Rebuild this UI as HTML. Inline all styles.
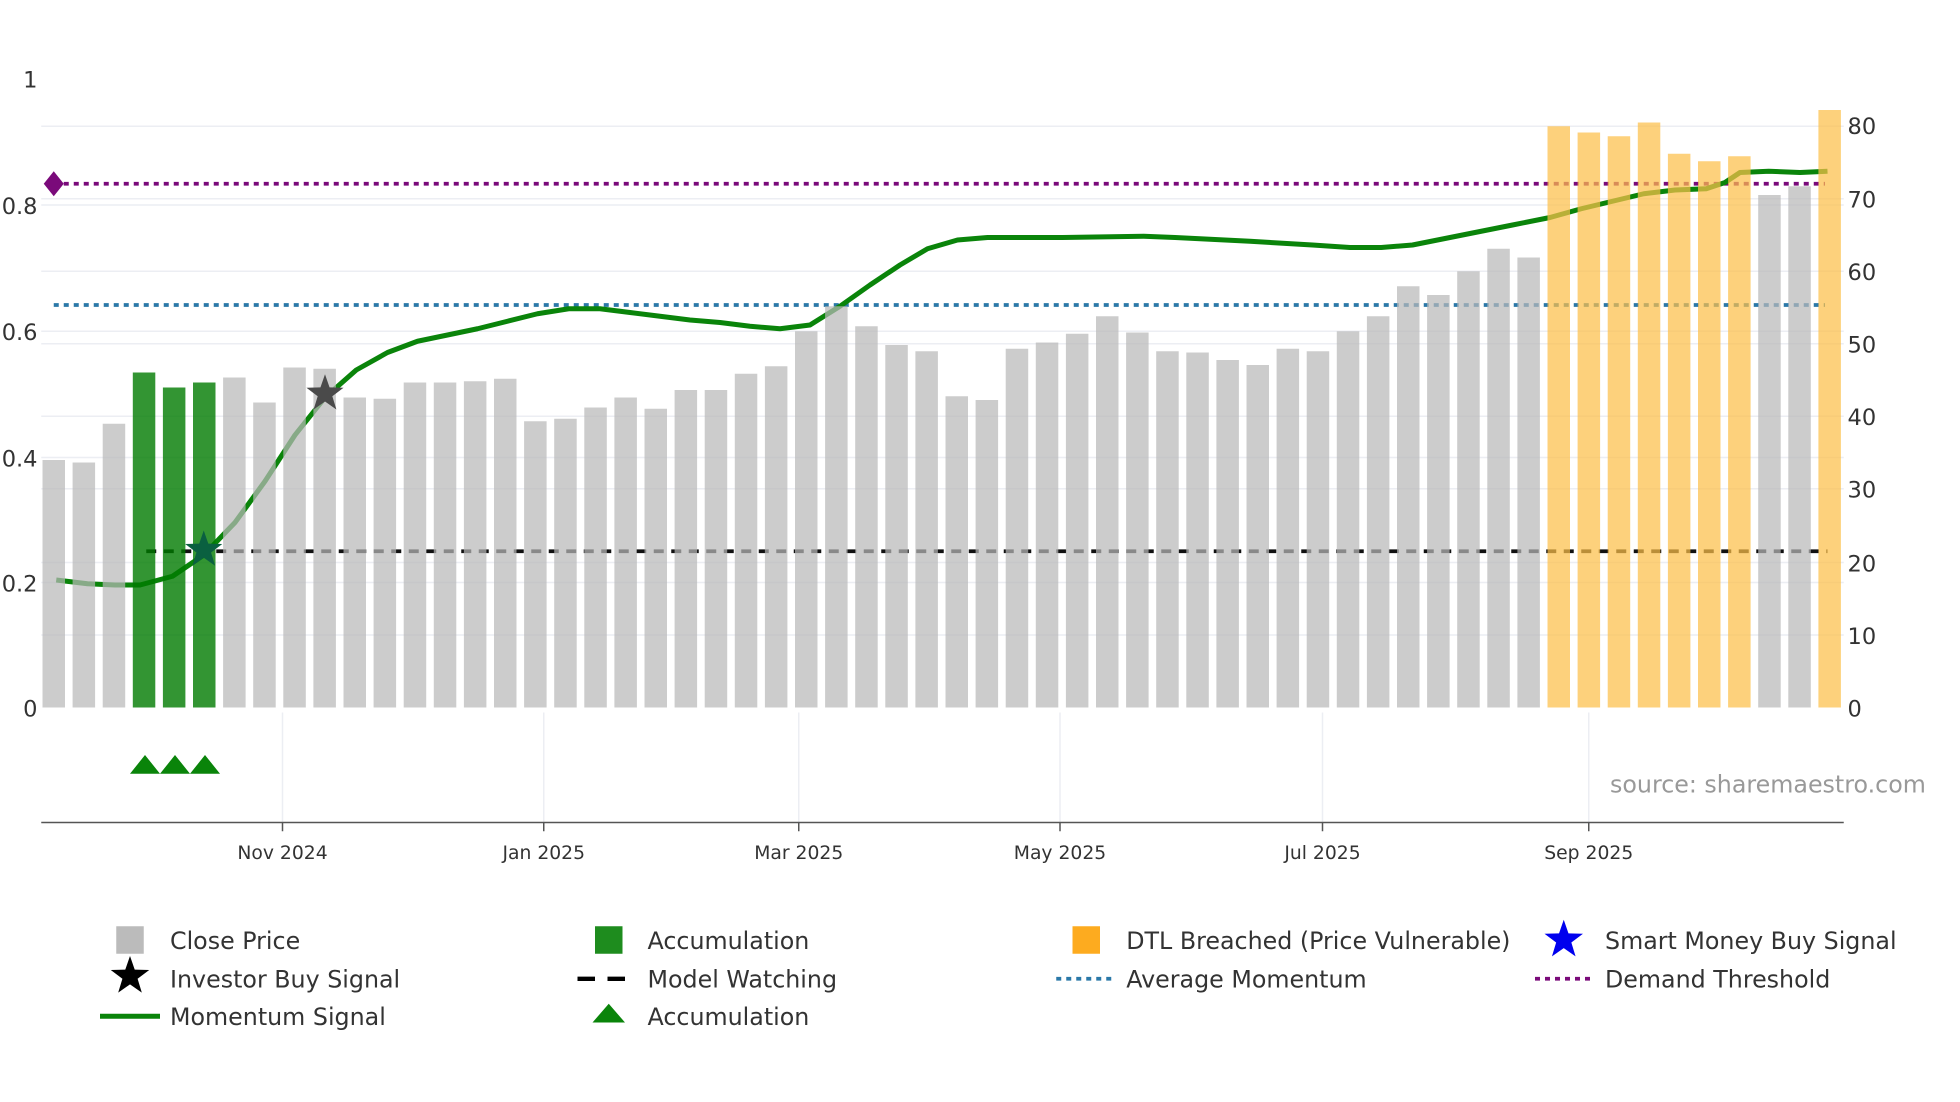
<!DOCTYPE html>
<html><head><meta charset="utf-8"><style>
html,body{margin:0;padding:0;background:#fff;}
svg{display:block;}
text{font-family:"DejaVu Sans","Liberation Sans",sans-serif;fill:#333;}
</style></head><body>
<svg width="1960" height="1102" viewBox="0 0 1568 881.6" xmlns="http://www.w3.org/2000/svg">
<rect width="1568" height="882" fill="#fff"/>
<g stroke="#eceef3" stroke-width="1.2">
<line x1="33" x2="1475" y1="101" y2="101"/><line x1="33" x2="1475" y1="159" y2="159"/>
<line x1="33" x2="1475" y1="164" y2="164"/><line x1="33" x2="1475" y1="217" y2="217"/>
<line x1="33" x2="1475" y1="265" y2="265"/><line x1="33" x2="1475" y1="275" y2="275"/>
<line x1="33" x2="1475" y1="333" y2="333"/><line x1="33" x2="1475" y1="366" y2="366"/>
<line x1="33" x2="1475" y1="391" y2="391"/><line x1="33" x2="1475" y1="450" y2="450"/>
<line x1="33" x2="1475" y1="466" y2="466"/><line x1="33" x2="1475" y1="508" y2="508"/>
<line x1="226" x2="226" y1="570" y2="658"/><line x1="435" x2="435" y1="570" y2="658"/>
<line x1="639" x2="639" y1="570" y2="658"/><line x1="848" x2="848" y1="570" y2="658"/>
<line x1="1058" x2="1058" y1="570" y2="658"/><line x1="1271" x2="1271" y1="570" y2="658"/>
</g>
<line x1="43" x2="1460" y1="147" y2="147" stroke="#7a0a7a" stroke-width="3" stroke-dasharray="4,4"/>
<line x1="43" x2="1460" y1="244" y2="244" stroke="#2a78a8" stroke-width="3" stroke-dasharray="4,4"/>
<line x1="117" x2="1462" y1="441" y2="441" stroke="#111" stroke-width="3" stroke-dasharray="8,6"/>
<polyline fill="none" stroke="#0a840a" stroke-width="4" stroke-linejoin="round" points="45,464 70,467 92,468 112,468 138,461 163,444 188,418 212,385 236,348 260,318 285,296 310,282 334,273 358,268 382,263 406,257 430,251 455,247 480,247 504,250 528,253 552,256 576,258 600,261 624,263 648,260 672,245 696,228 720,212 742,199 766,192 790,190 850,190 915,189 940,190 1000,193 1050,196 1080,198 1105,198 1130,196 1155,191 1180,186 1210,180 1240,174 1265,167 1290,161 1315,155 1340,152 1365,151 1380,146 1392,138 1415,137 1440,138 1462,137"/>
<path d="M43 137 L51 147 L43 157 L35 147Z" fill="#7a0a7a"/>
<g fill-opacity="0.72">
<rect x="34" y="368" width="18" height="198" fill="#b8b8b8"/>
<rect x="58.08" y="370" width="18" height="196" fill="#b8b8b8"/>
<rect x="82.16" y="339" width="18" height="227" fill="#b8b8b8"/>
<rect x="106.24" y="298" width="18" height="268" fill="#007a00" fill-opacity="0.8"/>
<rect x="130.32" y="310" width="18" height="256" fill="#007a00" fill-opacity="0.8"/>
<rect x="154.4" y="306" width="18" height="260" fill="#007a00" fill-opacity="0.8"/>
<rect x="178.48" y="302" width="18" height="264" fill="#b8b8b8"/>
<rect x="202.56" y="322" width="18" height="244" fill="#b8b8b8"/>
<rect x="226.64" y="294" width="18" height="272" fill="#b8b8b8"/>
<rect x="250.72" y="295" width="18" height="271" fill="#b8b8b8"/>
<rect x="274.8" y="318" width="18" height="248" fill="#b8b8b8"/>
<rect x="298.88" y="319" width="18" height="247" fill="#b8b8b8"/>
<rect x="322.96" y="306" width="18" height="260" fill="#b8b8b8"/>
<rect x="347.04" y="306" width="18" height="260" fill="#b8b8b8"/>
<rect x="371.12" y="305" width="18" height="261" fill="#b8b8b8"/>
<rect x="395.2" y="303" width="18" height="263" fill="#b8b8b8"/>
<rect x="419.28" y="337" width="18" height="229" fill="#b8b8b8"/>
<rect x="443.36" y="335" width="18" height="231" fill="#b8b8b8"/>
<rect x="467.44" y="326" width="18" height="240" fill="#b8b8b8"/>
<rect x="491.52" y="318" width="18" height="248" fill="#b8b8b8"/>
<rect x="515.6" y="327" width="18" height="239" fill="#b8b8b8"/>
<rect x="539.68" y="312" width="18" height="254" fill="#b8b8b8"/>
<rect x="563.76" y="312" width="18" height="254" fill="#b8b8b8"/>
<rect x="587.84" y="299" width="18" height="267" fill="#b8b8b8"/>
<rect x="611.92" y="293" width="18" height="273" fill="#b8b8b8"/>
<rect x="636" y="265" width="18" height="301" fill="#b8b8b8"/>
<rect x="660.08" y="245" width="18" height="321" fill="#b8b8b8"/>
<rect x="684.16" y="261" width="18" height="305" fill="#b8b8b8"/>
<rect x="708.24" y="276" width="18" height="290" fill="#b8b8b8"/>
<rect x="732.32" y="281" width="18" height="285" fill="#b8b8b8"/>
<rect x="756.4" y="317" width="18" height="249" fill="#b8b8b8"/>
<rect x="780.48" y="320" width="18" height="246" fill="#b8b8b8"/>
<rect x="804.56" y="279" width="18" height="287" fill="#b8b8b8"/>
<rect x="828.64" y="274" width="18" height="292" fill="#b8b8b8"/>
<rect x="852.72" y="267" width="18" height="299" fill="#b8b8b8"/>
<rect x="876.8" y="253" width="18" height="313" fill="#b8b8b8"/>
<rect x="900.88" y="266" width="18" height="300" fill="#b8b8b8"/>
<rect x="924.96" y="281" width="18" height="285" fill="#b8b8b8"/>
<rect x="949.04" y="282" width="18" height="284" fill="#b8b8b8"/>
<rect x="973.12" y="288" width="18" height="278" fill="#b8b8b8"/>
<rect x="997.2" y="292" width="18" height="274" fill="#b8b8b8"/>
<rect x="1021.28" y="279" width="18" height="287" fill="#b8b8b8"/>
<rect x="1045.36" y="281" width="18" height="285" fill="#b8b8b8"/>
<rect x="1069.44" y="265" width="18" height="301" fill="#b8b8b8"/>
<rect x="1093.52" y="253" width="18" height="313" fill="#b8b8b8"/>
<rect x="1117.6" y="229" width="18" height="337" fill="#b8b8b8"/>
<rect x="1141.68" y="236" width="18" height="330" fill="#b8b8b8"/>
<rect x="1165.76" y="217" width="18" height="349" fill="#b8b8b8"/>
<rect x="1189.84" y="199" width="18" height="367" fill="#b8b8b8"/>
<rect x="1213.92" y="206" width="18" height="360" fill="#b8b8b8"/>
<rect x="1238" y="101" width="18" height="465" fill="#fcbf4a"/>
<rect x="1262.08" y="106" width="18" height="460" fill="#fcbf4a"/>
<rect x="1286.16" y="109" width="18" height="457" fill="#fcbf4a"/>
<rect x="1310.24" y="98" width="18" height="468" fill="#fcbf4a"/>
<rect x="1334.32" y="123" width="18" height="443" fill="#fcbf4a"/>
<rect x="1358.4" y="129" width="18" height="437" fill="#fcbf4a"/>
<rect x="1382.48" y="125" width="18" height="441" fill="#fcbf4a"/>
<rect x="1406.56" y="156" width="18" height="410" fill="#b8b8b8"/>
<rect x="1430.64" y="149" width="18" height="417" fill="#b8b8b8"/>
<rect x="1454.72" y="88" width="18" height="478" fill="#fcbf4a"/>
</g>
<path transform="translate(163,440) scale(1.3)" d="M0,-12 L2.8,-3.9 L11.4,-3.7 L4.5,1.5 L7,9.7 L0,4.8 L-7,9.7 L-4.5,1.5 L-11.4,-3.7 L-2.8,-3.9Z" fill="#0a6040"/>
<path transform="translate(260,315) scale(1.3)" d="M0,-12 L2.8,-3.9 L11.4,-3.7 L4.5,1.5 L7,9.7 L0,4.8 L-7,9.7 L-4.5,1.5 L-11.4,-3.7 L-2.8,-3.9Z" fill="#4a4a4a"/>
<g fill="#0a840a"><path d="M104,619 L116,604 L128,619Z"/><path d="M128,619 L140,604 L152,619Z"/><path d="M152,619 L164,604 L176,619Z"/></g>
<line x1="33" x2="1475" y1="658" y2="658" stroke="#555" stroke-width="1.2"/>
<g stroke="#555" stroke-width="1.2"><line x1="226" x2="226" y1="658" y2="665"/><line x1="435" x2="435" y1="658" y2="665"/><line x1="639" x2="639" y1="658" y2="665"/><line x1="848" x2="848" y1="658" y2="665"/><line x1="1058" x2="1058" y1="658" y2="665"/><line x1="1271" x2="1271" y1="658" y2="665"/></g>
<g font-size="15" text-anchor="middle">
<text x="226" y="687">Nov 2024</text><text x="435" y="687">Jan 2025</text><text x="639" y="687">Mar 2025</text><text x="848" y="687">May 2025</text><text x="1058" y="687">Jul 2025</text><text x="1271" y="687">Sep 2025</text>
</g>
<g font-size="18" text-anchor="end">
<text x="30" y="70">1</text><text x="30" y="171">0.8</text><text x="30" y="272">0.6</text><text x="30" y="373">0.4</text><text x="30" y="473">0.2</text><text x="30" y="573">0</text>
</g>
<g font-size="18">
<text x="1478" y="107">80</text><text x="1478" y="166">70</text><text x="1478" y="224">60</text><text x="1478" y="282">50</text><text x="1478" y="340">40</text><text x="1478" y="398">30</text><text x="1478" y="457">20</text><text x="1478" y="515">10</text><text x="1478" y="573">0</text>
</g>
<text x="1288" y="634" font-size="19" style="fill:#999">source: sharemaestro.com</text>
<g font-size="19">
<rect x="93" y="741" width="22" height="22" fill="#bbb"/><text x="136" y="759">Close Price</text>
<path transform="translate(104,781) scale(1.35)" d="M0,-12 L2.8,-3.9 L11.4,-3.7 L4.5,1.5 L7,9.7 L0,4.8 L-7,9.7 L-4.5,1.5 L-11.4,-3.7 L-2.8,-3.9Z" fill="#000"/><text x="136" y="790">Investor Buy Signal</text>
<line x1="80" x2="128" y1="813" y2="813" stroke="#0a840a" stroke-width="4"/><text x="136" y="820">Momentum Signal</text>
<rect x="476" y="741" width="22" height="22" fill="#1e8c1e"/><text x="518" y="759">Accumulation</text>
<line x1="462" x2="508" y1="783" y2="783" stroke="#000" stroke-width="3.5" stroke-dasharray="14,10"/><text x="518" y="790">Model Watching</text>
<path d="M474,818 L487,803 L500,818Z" fill="#0a840a"/><text x="518" y="820">Accumulation</text>
<rect x="858" y="741" width="22" height="22" fill="#fdab1f"/><text x="901" y="759">DTL Breached (Price Vulnerable)</text>
<line x1="845" x2="891" y1="783" y2="783" stroke="#2a78a8" stroke-width="3" stroke-dasharray="4,4"/><text x="901" y="790">Average Momentum</text>
<path transform="translate(1251,752) scale(1.35)" d="M0,-12 L2.8,-3.9 L11.4,-3.7 L4.5,1.5 L7,9.7 L0,4.8 L-7,9.7 L-4.5,1.5 L-11.4,-3.7 L-2.8,-3.9Z" fill="#0000ee"/><text x="1284" y="759">Smart Money Buy Signal</text>
<line x1="1228" x2="1274" y1="783" y2="783" stroke="#7a0a7a" stroke-width="3" stroke-dasharray="4,4"/><text x="1284" y="790">Demand Threshold</text>
</g>
</svg>
</body></html>
